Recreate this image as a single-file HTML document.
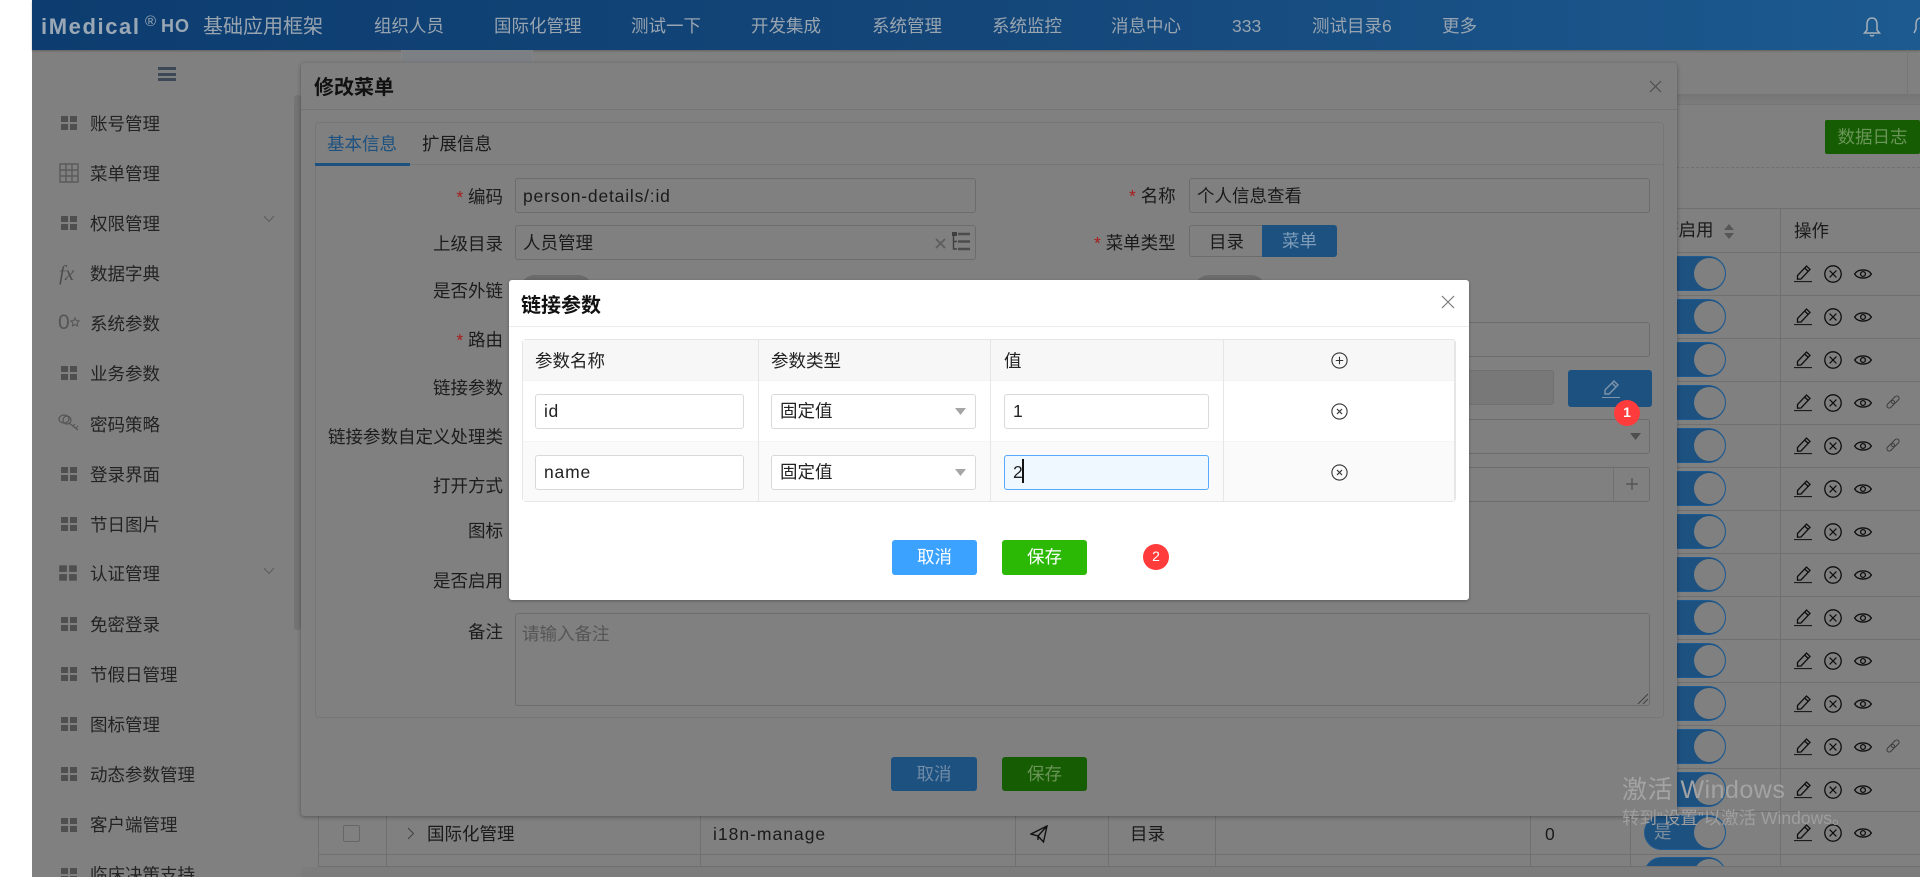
<!DOCTYPE html>
<html lang="zh-CN">
<head>
<meta charset="utf-8">
<title>修改菜单</title>
<style>
html,body{margin:0;padding:0;width:1920px;height:885px;overflow:hidden;background:#fff;}
body{font-family:"Liberation Sans","Noto Sans CJK SC",sans-serif;font-size:17.5px;color:#1a1a1a;position:relative;}
div,span,svg{position:absolute;box-sizing:border-box;}
.t{white-space:nowrap;height:24px;line-height:24px;}
.n{color:#98a4b0;margin-top:1px;}
.s{color:#232323;left:90px;margin-top:1px;}
.l{text-align:right;right:calc(1920px - 503px);color:#1c1c1c;margin-top:1px;}
.b{border:1px solid #6c6c6c;border-radius:3px;height:35px;}
.r{color:#a81c1c;}
.g{width:16px;height:14px;left:61px;}
.g i{position:absolute;width:7px;height:6px;background:#4f4f4f;}
.g i:nth-child(1){left:0;top:0}.g i:nth-child(2){left:9px;top:0}.g i:nth-child(3){left:0;top:8px}.g i:nth-child(4){left:9px;top:8px}
.tg{left:1644px;width:82px;height:35px;border-radius:18px;background:#1d5180;border:1px solid #1f5a90;}
.tg b{position:absolute;display:block;left:49px;top:1px;width:31px;height:31px;border-radius:50%;background:#808080;}
.hl{left:1676px;width:244px;height:1px;background:#707070;}
.hb{left:318px;width:1602px;height:1px;background:#707070;}
.v{width:1px;background:#707070;}
.ip{background:#fff;border:1px solid #d9d9d9;border-radius:3px;height:35px;color:#222;padding-left:8px;line-height:33px;}
.btn{text-align:center;border-radius:3px;height:35px;line-height:35px;}
.ic{overflow:visible;}
</style>
</head>
<body>
<svg width="0" height="0" style="left:0;top:0">
<defs>
<symbol id="pen" viewBox="0 0 18 18"><path d="M3.5 14.2 L3.5 10.5 L12.5 1 L16 4.4 L7 14 Z M10.6 3 L14.2 6.4" fill="none" stroke="#0e0e0e" stroke-width="1.3"/><path d="M0 16.6 H18" stroke="#0e0e0e" stroke-width="1"/></symbol>
<symbol id="xc" viewBox="0 0 18 18"><circle cx="9" cy="9" r="8.2" fill="none" stroke="#0e0e0e" stroke-width="1.3"/><path d="M5.6 5.6 L12.4 12.4 M12.4 5.6 L5.6 12.4" stroke="#0e0e0e" stroke-width="1.2"/></symbol>
<symbol id="eye" viewBox="0 0 18 12"><path d="M0.6 6 C4 0.6 14 0.6 17.4 6 C14 11.4 4 11.4 0.6 6 Z" fill="none" stroke="#0e0e0e" stroke-width="1.3"/><circle cx="9" cy="6" r="2.4" fill="none" stroke="#0e0e0e" stroke-width="1.3"/></symbol>
<symbol id="lnk" viewBox="0 0 14 14"><g fill="none" stroke="#3b3b3b" stroke-width="1"><rect x="0.3" y="6.9" width="9" height="4.6" rx="2.3" transform="rotate(-45 4.8 9.2)"/><rect x="4.7" y="2.5" width="9" height="4.6" rx="2.3" transform="rotate(-45 9.2 4.8)"/></g></symbol>
</defs>
</svg>

<!-- base page -->
<div style="left:32px;top:0;width:1888px;height:877px;background:#808080;overflow:hidden"></div>

<!-- nav -->
<div style="left:32px;top:0;width:1888px;height:50px;background:linear-gradient(90deg,#0d3d70 0%,#144679 50%,#1c5a90 100%);box-shadow:0 1px 2px rgba(0,0,0,.25)"></div>
<div class="t" style="left:41px;top:15px;font-weight:bold;font-size:22px;letter-spacing:1.6px;color:#9aa8b5">iMedical</div>
<div class="t" style="left:145px;top:10px;font-size:15px;color:#9aa8b5">®</div>
<div class="t" style="left:161px;top:14px;font-weight:bold;font-size:18px;color:#9aa8b5;letter-spacing:1px">HO</div>
<div class="t n" style="left:203px;top:14px;font-size:20px">基础应用框架</div>
<div class="t n" style="left:374px;top:13px">组织人员</div>
<div class="t n" style="left:494px;top:13px">国际化管理</div>
<div class="t n" style="left:631px;top:13px">测试一下</div>
<div class="t n" style="left:751px;top:13px">开发集成</div>
<div class="t n" style="left:872px;top:13px">系统管理</div>
<div class="t n" style="left:992px;top:13px">系统监控</div>
<div class="t n" style="left:1111px;top:13px">消息中心</div>
<div class="t n" style="left:1232px;top:13px">333</div>
<div class="t n" style="left:1312px;top:13px">测试目录6</div>
<div class="t n" style="left:1442px;top:13px">更多</div>
<svg class="ic" style="left:1862px;top:16px" width="20" height="22" viewBox="0 0 20 22"><path d="M10 2 C6 2 5 5 5 9 V14 L2.5 17 H17.5 L15 14 V9 C15 5 14 2 10 2 Z M8 19 Q10 21 12 19" fill="none" stroke="#a5afba" stroke-width="1.5"/></svg>
<svg class="ic" style="left:1914px;top:16px" width="6" height="20" viewBox="0 0 6 20"><path d="M6 2 Q2 3 2 8 V13 L0 17" fill="none" stroke="#a5afba" stroke-width="1.5"/></svg>

<!-- sidebar -->
<div style="left:158px;top:67px;width:18px;height:3px;background:#3c4856"></div>
<div style="left:158px;top:72.5px;width:18px;height:3px;background:#3c4856"></div>
<div style="left:158px;top:78px;width:18px;height:3px;background:#3c4856"></div>
<div style="left:294px;top:95px;width:7px;height:535px;background:#747474;border-radius:3px"></div>

<div class="g" style="top:116px"><i></i><i></i><i></i><i></i></div><div class="t s" style="top:111px">账号管理</div>
<svg style="left:59px;top:163px" width="20" height="20" viewBox="0 0 20 20"><path d="M1 1 H19 V19 H1 Z M7 1 V19 M13 1 V19 M1 7 H19 M1 13 H19" fill="none" stroke="#5a5a5a" stroke-width="1.4"/></svg><div class="t s" style="top:161px">菜单管理</div>
<div class="g" style="top:216px"><i></i><i></i><i></i><i></i></div><div class="t s" style="top:211px">权限管理</div>
<svg style="left:263px;top:215px" width="12" height="8" viewBox="0 0 12 8"><path d="M1 1 L6 6.5 L11 1" fill="none" stroke="#5c5c5c" stroke-width="1"/></svg>
<div class="t" style="left:59px;top:261px;font-family:'Liberation Serif',serif;font-style:italic;font-size:21px;color:#4e4e4e">fx</div><div class="t s" style="top:261px">数据字典</div>
<div class="t" style="left:58px;top:311px;font-size:21px;color:#555">0</div><svg style="left:70px;top:317px" width="10" height="10" viewBox="0 0 10 10"><path d="M5 .8 L6.3 3.5 L9.3 3.9 L7.1 6 L7.6 9 L5 7.6 L2.4 9 L2.9 6 L.7 3.9 L3.7 3.5 Z" fill="none" stroke="#555" stroke-width="1"/></svg><div class="t s" style="top:311px">系统参数</div>
<div class="g" style="top:366px"><i></i><i></i><i></i><i></i></div><div class="t s" style="top:361px">业务参数</div>
<svg style="left:58px;top:413px" width="22" height="20" viewBox="0 0 22 20"><ellipse cx="6" cy="6" rx="5" ry="4" fill="none" stroke="#555" stroke-width="1.2"/><ellipse cx="9" cy="7" rx="4" ry="4" fill="none" stroke="#555" stroke-width="1.2"/><path d="M11 10 L20 17 M15 13 L17 11 M18 15 L20 13" stroke="#555" stroke-width="1.2"/></svg><div class="t s" style="top:412px">密码策略</div>
<div class="g" style="top:467px"><i></i><i></i><i></i><i></i></div><div class="t s" style="top:462px">登录界面</div>
<div class="g" style="top:517px"><i></i><i></i><i></i><i></i></div><div class="t s" style="top:512px">节日图片</div>
<div class="g" style="top:566px;left:60px;transform:scale(1.1)"><i></i><i></i><i></i><i></i></div><div class="t s" style="top:561px">认证管理</div>
<svg style="left:263px;top:567px" width="12" height="8" viewBox="0 0 12 8"><path d="M1 1 L6 6.5 L11 1" fill="none" stroke="#5c5c5c" stroke-width="1"/></svg>
<div class="g" style="top:617px"><i></i><i></i><i></i><i></i></div><div class="t s" style="top:612px">免密登录</div>
<div class="g" style="top:667px"><i></i><i></i><i></i><i></i></div><div class="t s" style="top:662px">节假日管理</div>
<div class="g" style="top:717px"><i></i><i></i><i></i><i></i></div><div class="t s" style="top:712px">图标管理</div>
<div class="g" style="top:767px"><i></i><i></i><i></i><i></i></div><div class="t s" style="top:762px">动态参数管理</div>
<div class="g" style="top:818px"><i></i><i></i><i></i><i></i></div><div class="t s" style="top:812px">客户端管理</div>
<div style="left:32px;top:860px;width:268px;height:17px;overflow:hidden">
  <div class="g" style="top:8px;left:29px"><i></i><i></i><i></i><i></i></div><div class="t s" style="top:2px;left:58px">临床决策支持</div>
</div>

<!-- main behind -->
<div style="left:304px;top:50px;width:1604px;height:44px;border-right:1px solid #767676"></div>
<div style="left:401px;top:50px;width:132px;height:13px;background:#7c8084;border:1px solid #848484;border-top:0"></div>
<div style="left:301px;top:94px;width:1619px;height:11px;background:linear-gradient(#757575,#7c7c7c);border-bottom:1px solid #767676"></div>
<div class="btn" style="left:1825px;top:120px;width:95px;height:34px;line-height:34px;background:#155c02;color:#6a9558;border-radius:2px">数据日志</div>
<div style="left:1676px;top:167px;width:244px;border-top:1px dashed #707070"></div>

<div class="hl" style="top:208px"></div>
<div class="hl" style="top:252px"></div>
<div class="hl" style="top:295px"></div>
<div class="hl" style="top:338px"></div>
<div class="hl" style="top:381px"></div>
<div class="hl" style="top:424px"></div>
<div class="hl" style="top:467px"></div>
<div class="hl" style="top:510px"></div>
<div class="hl" style="top:553px"></div>
<div class="hl" style="top:596px"></div>
<div class="hl" style="top:639px"></div>
<div class="hl" style="top:682px"></div>
<div class="hl" style="top:725px"></div>
<div class="hl" style="top:768px"></div>
<div class="hb" style="top:811px"></div>
<div class="hb" style="top:854px"></div>
<div class="hb" style="top:866px"></div>
<div style="left:301px;top:867px;width:1619px;height:10px;background:#7c7c7c"></div>
<div class="v" style="left:1780px;top:208px;height:658px"></div>
<div class="v" style="left:1630px;top:208px;height:658px"></div>
<div class="v" style="left:1530px;top:811px;height:55px"></div>
<div class="v" style="left:1215px;top:811px;height:55px"></div>
<div class="v" style="left:1108px;top:811px;height:55px"></div>
<div class="v" style="left:1015px;top:811px;height:55px"></div>
<div class="v" style="left:700px;top:811px;height:55px"></div>
<div class="v" style="left:386px;top:811px;height:55px"></div>
<div class="v" style="left:318px;top:811px;height:55px"></div>

<div class="t" style="left:1661px;top:218px">否启用</div>
<svg style="left:1723px;top:223px" width="12" height="17" viewBox="0 0 12 17"><path d="M6 1 L11 7 H1 Z M1 10 H11 L6 16 Z" fill="#565656"/></svg>
<div class="t" style="left:1794px;top:219px">操作</div>

<div class="tg" style="top:256px"><b></b></div>
<div class="tg" style="top:299px"><b></b></div>
<div class="tg" style="top:342px"><b></b></div>
<div class="tg" style="top:385px"><b></b></div>
<div class="tg" style="top:428px"><b></b></div>
<div class="tg" style="top:471px"><b></b></div>
<div class="tg" style="top:514px"><b></b></div>
<div class="tg" style="top:557px"><b></b></div>
<div class="tg" style="top:600px"><b></b></div>
<div class="tg" style="top:643px"><b></b></div>
<div class="tg" style="top:686px"><b></b></div>
<div class="tg" style="top:729px"><b></b></div>
<div class="tg" style="top:772px"><b></b></div>
<div class="tg" style="top:815px"><b></b></div>
<div class="t" style="left:1654px;top:820px;color:#7e8d9c">是</div>
<div style="left:1640px;top:857px;width:100px;height:9px;overflow:hidden"><div class="tg" style="left:4px;top:0"><b></b></div></div>

<!-- row icons -->
<svg style="left:1794px;top:265px" width="18" height="18"><use href="#pen"/></svg><svg style="left:1824px;top:265px" width="18" height="18"><use href="#xc"/></svg><svg style="left:1854px;top:268px" width="18" height="12"><use href="#eye"/></svg>
<svg style="left:1794px;top:308px" width="18" height="18"><use href="#pen"/></svg><svg style="left:1824px;top:308px" width="18" height="18"><use href="#xc"/></svg><svg style="left:1854px;top:311px" width="18" height="12"><use href="#eye"/></svg>
<svg style="left:1794px;top:351px" width="18" height="18"><use href="#pen"/></svg><svg style="left:1824px;top:351px" width="18" height="18"><use href="#xc"/></svg><svg style="left:1854px;top:354px" width="18" height="12"><use href="#eye"/></svg>
<svg style="left:1794px;top:394px" width="18" height="18"><use href="#pen"/></svg><svg style="left:1824px;top:394px" width="18" height="18"><use href="#xc"/></svg><svg style="left:1854px;top:397px" width="18" height="12"><use href="#eye"/></svg><svg style="left:1886px;top:395px" width="14" height="14"><use href="#lnk"/></svg>
<svg style="left:1794px;top:437px" width="18" height="18"><use href="#pen"/></svg><svg style="left:1824px;top:437px" width="18" height="18"><use href="#xc"/></svg><svg style="left:1854px;top:440px" width="18" height="12"><use href="#eye"/></svg><svg style="left:1886px;top:438px" width="14" height="14"><use href="#lnk"/></svg>
<svg style="left:1794px;top:480px" width="18" height="18"><use href="#pen"/></svg><svg style="left:1824px;top:480px" width="18" height="18"><use href="#xc"/></svg><svg style="left:1854px;top:483px" width="18" height="12"><use href="#eye"/></svg>
<svg style="left:1794px;top:523px" width="18" height="18"><use href="#pen"/></svg><svg style="left:1824px;top:523px" width="18" height="18"><use href="#xc"/></svg><svg style="left:1854px;top:526px" width="18" height="12"><use href="#eye"/></svg>
<svg style="left:1794px;top:566px" width="18" height="18"><use href="#pen"/></svg><svg style="left:1824px;top:566px" width="18" height="18"><use href="#xc"/></svg><svg style="left:1854px;top:569px" width="18" height="12"><use href="#eye"/></svg>
<svg style="left:1794px;top:609px" width="18" height="18"><use href="#pen"/></svg><svg style="left:1824px;top:609px" width="18" height="18"><use href="#xc"/></svg><svg style="left:1854px;top:612px" width="18" height="12"><use href="#eye"/></svg>
<svg style="left:1794px;top:652px" width="18" height="18"><use href="#pen"/></svg><svg style="left:1824px;top:652px" width="18" height="18"><use href="#xc"/></svg><svg style="left:1854px;top:655px" width="18" height="12"><use href="#eye"/></svg>
<svg style="left:1794px;top:695px" width="18" height="18"><use href="#pen"/></svg><svg style="left:1824px;top:695px" width="18" height="18"><use href="#xc"/></svg><svg style="left:1854px;top:698px" width="18" height="12"><use href="#eye"/></svg>
<svg style="left:1794px;top:738px" width="18" height="18"><use href="#pen"/></svg><svg style="left:1824px;top:738px" width="18" height="18"><use href="#xc"/></svg><svg style="left:1854px;top:741px" width="18" height="12"><use href="#eye"/></svg><svg style="left:1886px;top:739px" width="14" height="14"><use href="#lnk"/></svg>
<svg style="left:1794px;top:781px" width="18" height="18"><use href="#pen"/></svg><svg style="left:1824px;top:781px" width="18" height="18"><use href="#xc"/></svg><svg style="left:1854px;top:784px" width="18" height="12"><use href="#eye"/></svg>
<svg style="left:1794px;top:824px" width="18" height="18"><use href="#pen"/></svg><svg style="left:1824px;top:824px" width="18" height="18"><use href="#xc"/></svg><svg style="left:1854px;top:827px" width="18" height="12"><use href="#eye"/></svg>

<!-- bottom row -->
<div style="left:343px;top:825px;width:17px;height:17px;border:1px solid #666;border-radius:2px"></div>
<svg style="left:407px;top:827px" width="8" height="13" viewBox="0 0 8 13"><path d="M1 1 L6.5 6.5 L1 12" fill="none" stroke="#444" stroke-width="1.1"/></svg>
<div class="t" style="left:427px;top:822px">国际化管理</div>
<div class="t" style="left:713px;top:822px;letter-spacing:1px">i18n-manage</div>
<svg style="left:1030px;top:825px" width="18" height="18" viewBox="0 0 18 18"><path d="M1 9 L17 1 L13.5 17 L8 11 Z M17 1 L8 11 L8 15" fill="none" stroke="#111" stroke-width="1.4"/></svg>
<div class="t" style="left:1130px;top:822px">目录</div>
<div class="t" style="left:1545px;top:822px">0</div>

<!-- outer modal -->
<div style="left:301px;top:63px;width:1376px;height:753px;background:#808080;border-radius:3px;box-shadow:0 1px 4px rgba(0,0,0,.35)"></div>
<div style="left:301px;top:109px;width:1376px;height:1px;background:#747474"></div>
<div class="t" style="left:314px;top:76px;font-size:20px;font-weight:bold;color:#111">修改菜单</div>
<svg style="left:1649px;top:80px" width="13" height="13" viewBox="0 0 13 13"><path d="M1 1 L12 12 M12 1 L1 12" stroke="#4c4c4c" stroke-width="1.1"/></svg>

<div style="left:315px;top:122px;width:1349px;height:596px;border:1px solid #767676;border-radius:4px"></div>
<div style="left:315px;top:164px;width:1349px;height:1px;background:#767676"></div>
<div style="left:315px;top:163px;width:95px;height:3px;background:#1d5180"></div>
<div class="t" style="left:327px;top:132px;color:#1d5180">基本信息</div>
<div class="t" style="left:422px;top:132px">扩展信息</div>

<div class="t l" style="top:184px"><span class="r" style="position:static">* </span>编码</div>
<div class="b" style="left:515px;top:178px;width:461px"></div>
<div class="t" style="left:523px;top:184px;letter-spacing:.8px">person-details/:id</div>
<div class="t" style="left:1129px;top:184px"><span class="r" style="position:static">* </span>名称</div>
<div class="b" style="left:1189px;top:178px;width:461px"></div>
<div class="t" style="left:1197px;top:184px">个人信息查看</div>

<div class="t l" style="top:231px">上级目录</div>
<div class="b" style="left:515px;top:225px;width:461px"></div>
<div class="t" style="left:523px;top:231px">人员管理</div>
<svg style="left:935px;top:238px" width="11" height="11" viewBox="0 0 11 11"><path d="M1 1 L10 10 M10 1 L1 10" stroke="#5c5c5c" stroke-width="1.6"/></svg>
<svg style="left:951px;top:232px" width="20" height="20" viewBox="0 0 20 20"><rect x="1" y="0" width="5" height="4" fill="#3f3f3f"/><path d="M2.5 3 V17 H6 M2.5 9.5 H6" fill="none" stroke="#3f3f3f" stroke-width="1.4"/><path d="M7 2 H19 M7 9.5 H19 M7 17 H19" stroke="#4c4c4c" stroke-width="2.6"/></svg>
<div class="t" style="left:1094px;top:231px"><span class="r" style="position:static">* </span>菜单类型</div>
<div style="left:1189px;top:225px;width:74px;height:32px;border:1px solid #6c6c6c;border-radius:3px 0 0 3px"></div>
<div class="t" style="left:1209px;top:230px">目录</div>
<div class="btn" style="left:1262px;top:225px;width:75px;height:32px;line-height:32px;background:#1d5180;color:#7f9db8;border-radius:0 3px 3px 0">菜单</div>

<div class="t l" style="top:278px">是否外链</div>
<div style="left:520px;top:275px;width:73px;height:30px;border-radius:15px;background:#6b6b6b"></div>
<div style="left:1194px;top:275px;width:72px;height:30px;border-radius:15px;background:#6b6b6b"></div>

<div class="t l" style="top:327px"><span class="r" style="position:static">* </span>路由</div>
<div class="b" style="left:515px;top:322px;width:1135px"></div>
<div class="t l" style="top:375px">链接参数</div>
<div class="b" style="left:515px;top:370px;width:1039px;background:#787878;border-color:#707070"></div>
<div style="left:1568px;top:370px;width:84px;height:37px;background:#1d5180;border-radius:3px"></div>
<svg style="left:1601px;top:379px" width="20" height="20" viewBox="0 0 20 20"><path d="M4 15 L4 11 L13 2 L17 6 L8 15 Z M11 4 L15 8" fill="none" stroke="#7d95ab" stroke-width="1.4"/><path d="M1 18.5 H19" stroke="#7d95ab" stroke-width="1"/></svg>
<div class="t l" style="top:424px">链接参数自定义处理类</div>
<div class="b" style="left:515px;top:419px;width:1135px"></div>
<svg style="left:1630px;top:433px" width="11" height="7" viewBox="0 0 11 7"><path d="M0 0 H11 L5.5 7 Z" fill="#4e4e4e"/></svg>
<div class="t l" style="top:473px">打开方式</div>
<div class="b" style="left:515px;top:467px;width:1135px"></div>
<div class="v" style="left:1613px;top:467px;height:35px"></div>
<svg style="left:1625px;top:477px" width="14" height="14" viewBox="0 0 14 14"><path d="M7 1 V13 M1 7 H13" stroke="#4e4e4e" stroke-width="1.2"/></svg>
<div class="t l" style="top:518px">图标</div>
<div class="t l" style="top:568px">是否启用</div>
<div class="t l" style="top:619px">备注</div>
<div class="b" style="left:515px;top:613px;width:1135px;height:93px"></div>
<div class="t" style="left:522px;top:622px;color:#565656">请输入备注</div>
<svg style="left:1637px;top:693px" width="12" height="12" viewBox="0 0 12 12"><path d="M1 11 L11 1 M6 11 L11 6" stroke="#3f3f3f" stroke-width="1"/></svg>

<div class="btn" style="left:891px;top:757px;width:86px;height:34px;line-height:34px;background:#1d5180;color:#6f8ba6">取消</div>
<div class="btn" style="left:1002px;top:757px;width:85px;height:34px;line-height:34px;background:#155c02;color:#6a9558">保存</div>

<!-- watermark -->
<div class="t" style="left:1622px;top:775px;height:30px;line-height:30px;font-size:25px;letter-spacing:.5px;color:#a3a3a3">激活 Windows</div>
<div class="t" style="left:1622px;top:806px;font-size:17.5px;color:#9e9e9e">转到“设置”以激活 Windows。</div>

<!-- inner modal -->
<div style="left:509px;top:280px;width:960px;height:320px;background:#fff;border-radius:3px;box-shadow:0 1px 3px rgba(0,0,0,.3)"></div>
<div style="left:509px;top:326px;width:960px;height:1px;background:#ebebeb"></div>
<div class="t" style="left:521px;top:294px;font-size:20px;font-weight:bold;color:#111">链接参数</div>
<svg style="left:1441px;top:295px" width="14" height="14" viewBox="0 0 14 14"><path d="M1 1 L13 13 M13 1 L1 13" stroke="#7a7a7a" stroke-width="1.2"/></svg>

<div style="left:522px;top:339px;width:934px;height:163px;border:1px solid #e6e6e6;border-right-width:2px;border-radius:4px;background:#fff"></div>
<div style="left:523px;top:340px;width:931px;height:40px;background:#f7f7f7"></div>
<div style="left:523px;top:441px;width:931px;height:60px;background:#fafafa"></div>
<div style="left:523px;top:380px;width:931px;height:1px;background:#f3f3f3"></div>
<div style="left:523px;top:441px;width:931px;height:1px;background:#f5f5f5"></div>
<div class="v" style="left:758px;top:340px;height:161px;background:#e6e6e6"></div>
<div class="v" style="left:990px;top:340px;height:161px;background:#e6e6e6"></div>
<div class="v" style="left:1223px;top:340px;height:161px;background:#e6e6e6"></div>
<div class="t" style="left:535px;top:349px;color:#222">参数名称</div>
<div class="t" style="left:771px;top:349px;color:#222">参数类型</div>
<div class="t" style="left:1004px;top:349px;color:#222">值</div>
<svg style="left:1331px;top:352px" width="17" height="17" viewBox="0 0 17 17"><circle cx="8.5" cy="8.5" r="7.6" fill="none" stroke="#333" stroke-width="1.1"/><path d="M8.5 4.8 V12.2 M4.8 8.5 H12.2" stroke="#333" stroke-width="1.1"/></svg>

<div class="ip" style="left:535px;top:394px;width:209px;letter-spacing:.6px">id</div>
<div class="ip" style="left:771px;top:394px;width:205px">固定值</div>
<svg style="left:955px;top:408px" width="11" height="7" viewBox="0 0 11 7"><path d="M0 0 H11 L5.5 7 Z" fill="#a6a6a6"/></svg>
<div class="ip" style="left:1004px;top:394px;width:205px">1</div>
<svg style="left:1331px;top:403px" width="17" height="17" viewBox="0 0 17 17"><circle cx="8.5" cy="8.5" r="7.6" fill="none" stroke="#333" stroke-width="1.1"/><path d="M6 6 L11 11 M11 6 L6 11" stroke="#333" stroke-width="1.2"/></svg>

<div class="ip" style="left:535px;top:455px;width:209px;letter-spacing:.8px">name</div>
<div class="ip" style="left:771px;top:455px;width:205px">固定值</div>
<svg style="left:955px;top:469px" width="11" height="7" viewBox="0 0 11 7"><path d="M0 0 H11 L5.5 7 Z" fill="#a6a6a6"/></svg>
<div class="ip" style="left:1004px;top:455px;width:205px;background:#f0f8ff;border-color:#55aaff">2</div>
<div style="left:1022px;top:459px;width:2px;height:24px;background:#111"></div>
<svg style="left:1331px;top:464px" width="17" height="17" viewBox="0 0 17 17"><circle cx="8.5" cy="8.5" r="7.6" fill="none" stroke="#333" stroke-width="1.1"/><path d="M6 6 L11 11 M11 6 L6 11" stroke="#333" stroke-width="1.2"/></svg>

<div class="btn" style="left:892px;top:540px;width:85px;background:#3ba2ff;color:#fff">取消</div>
<div class="btn" style="left:1002px;top:540px;width:85px;background:#2cb906;color:#fff">保存</div>

<!-- badges -->
<div style="left:1143px;top:544px;width:26px;height:26px;border-radius:50%;background:#ff3b3b;color:#fff;font-size:14px;line-height:24px;text-align:center">2</div>
<div style="left:1614px;top:400px;width:26px;height:26px;border-radius:50%;background:#ff3b3b;color:#fff;font-size:14px;font-weight:bold;line-height:24px;text-align:center">1</div>

<!-- white edges -->
<div style="left:0;top:877px;width:1920px;height:8px;background:#fff"></div>
</body>
</html>
